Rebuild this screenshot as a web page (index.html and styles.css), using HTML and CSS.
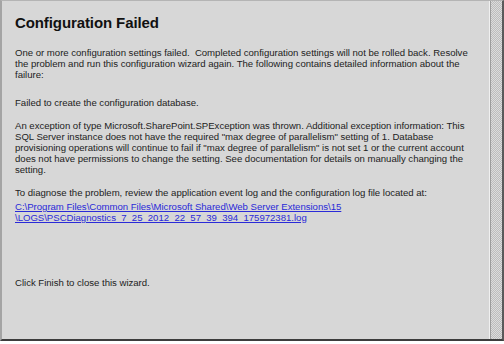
FILE: index.html
```html
<!DOCTYPE html>
<html>
<head>
    <link rel="stylesheet" href="styles.css">
</head>
<body>
    <div class="frame">
        <div class="panel">
            <h1 class="title">Configuration Failed</h1>

            <p class="intro">One or more configuration settings failed.&nbsp; Completed configuration settings will not be rolled back. Resolve<br>
            the problem and run this configuration wizard again. The following contains detailed information about the<br>
            failure:</p>

            <p class="failed">Failed to create the configuration database.</p>

            <p class="detail">An exception of type Microsoft.SharePoint.SPException was thrown. Additional exception information: This<br>
            SQL Server instance does not have the required "max degree of parallelism" setting of 1. Database<br>
            provisioning operations will continue to fail if "max degree of parallelism" is not set 1 or the current account<br>
            does not have permissions to change the setting. See documentation for details on manually changing the<br>
            setting.</p>

            <p class="diagnose">To diagnose the problem, review the application event log and the configuration log file located at:</p>
            <p class="logpath"><a href="#">C:\Program Files\Common Files\Microsoft Shared\Web Server Extensions\15<br>\LOGS\PSCDiagnostics_7_25_2012_22_57_39_394_175972381.log</a></p>

            <p class="finish">Click Finish to close this wizard.</p>
        </div>
        <div class="scrollbar"></div>
    </div>
</body>
</html>
```

FILE: styles.css
```css
body {
    margin: 0;
    background: #ffffff;
}

.frame {
    display: flex;
    width: 500px;
    height: 338px;
    border-left: 2px solid #a4a4a4;
    border-top: 1px solid #b4b4b4;
    border-right: 2px solid #5a5a5a;
    border-bottom: 2px solid #3c3c3c;
    box-shadow: 1px 2px 2px rgba(0,0,0,0.35);
    background: #d7d7d7;
}

.panel {
    flex: 1;
    padding: 0 0 0 13px;
    border-right: 1px solid #f0f0f0;
    font-family: "Liberation Sans", Arial, sans-serif;
    font-size: 9.6px;
    letter-spacing: -0.02px;
    line-height: 11px;
    color: #222;
}

.scrollbar {
    width: 11px;
    border-left: 1px solid #9c9c9c;
    background-color: #cfcfcf;
    background-image: repeating-conic-gradient(#bdbdbd 0 25%, #dcdcdc 0 50%);
    background-size: 2px 2px;
}

.title {
    margin: 12px 0 0;
    font-size: 15px;
    line-height: 20px;
    font-weight: bold;
    color: #111;
    letter-spacing: -0.1px;
}

.intro { margin: 14px 0 0; }
.failed { margin: 17px 0 0; }
.detail { margin: 12px 0 0; }
.diagnose { margin: 12px 0 0; }
.logpath { margin: 4px 0 0; line-height: 10.5px; }
.finish { margin: 54px 0 0; }

.logpath a {
    color: #2a2ad8;
    text-decoration: underline;
}
```
